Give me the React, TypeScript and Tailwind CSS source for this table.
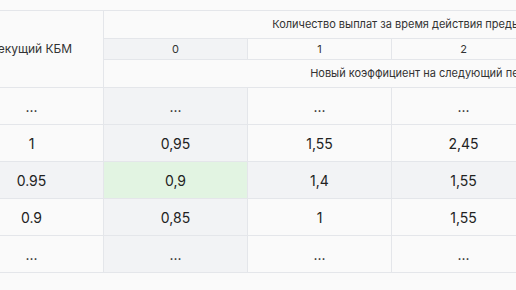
import React from "react";

const rows = [
  ["...", "...", "...", "...", "...", "..."],
  ["1", "0,95", "1,55", "2,45", "2,45", "2,45"],
  ["0.95", "0,9", "1,4", "1,55", "2,3", "2,45"],
  ["0.9", "0,85", "1", "1,55", "2,3", "2,45"],
  ["...", "...", "...", "...", "...", "..."],
];

export default function App() {
  return (
    <div
      className="w-[516px] h-[290px] overflow-hidden bg-[#fafafa] text-[14px] text-[#222]"
      style={{ fontFamily: "Inter, 'Noto Sans', sans-serif" }}
    >
      <div className="mt-[10px] ml-[-41px] w-max grid grid-cols-[repeat(6,143px)] grid-rows-[27px_20px_27px_repeat(5,36px)] gap-px p-px bg-[#e4e6ea]">
        <div className="row-span-3 bg-[#fafafa] flex items-center justify-center whitespace-nowrap text-[12px] text-[#333]">
          Текущий КБМ
        </div>
        <div className="col-span-5 bg-[#fafafa] flex items-center justify-center whitespace-nowrap text-[11px] text-[#333]">
          Количество выплат за время действия предыдущего договора ОСАГО
        </div>
        {["0", "1", "2", "3", "4"].map((h, i) => (
          <div
            key={h}
            className={`${i === 0 ? "bg-[#f2f3f5]" : "bg-[#fafafa]"} flex items-center justify-center text-[11px] text-[#333]`}
          >
            {h}
          </div>
        ))}
        <div className="col-span-5 bg-[#fafafa] flex items-center justify-center whitespace-nowrap text-[11px] text-[#333]">
          Новый коэффициент на следующий период страхования
        </div>
        {rows.map((r, ri) =>
          r.map((c, ci) => {
            let bg = "bg-[#fafafa]";
            if (ri === 2 && ci === 1) bg = "bg-[#e2f4e2]";
            else if (ri === 2 || ci === 1) bg = "bg-[#f2f3f5]";
            return (
              <div key={`${ri}-${ci}`} className={`${bg} flex items-center justify-center`}>
                {c}
              </div>
            );
          })
        )}
      </div>
    </div>
  );
}
